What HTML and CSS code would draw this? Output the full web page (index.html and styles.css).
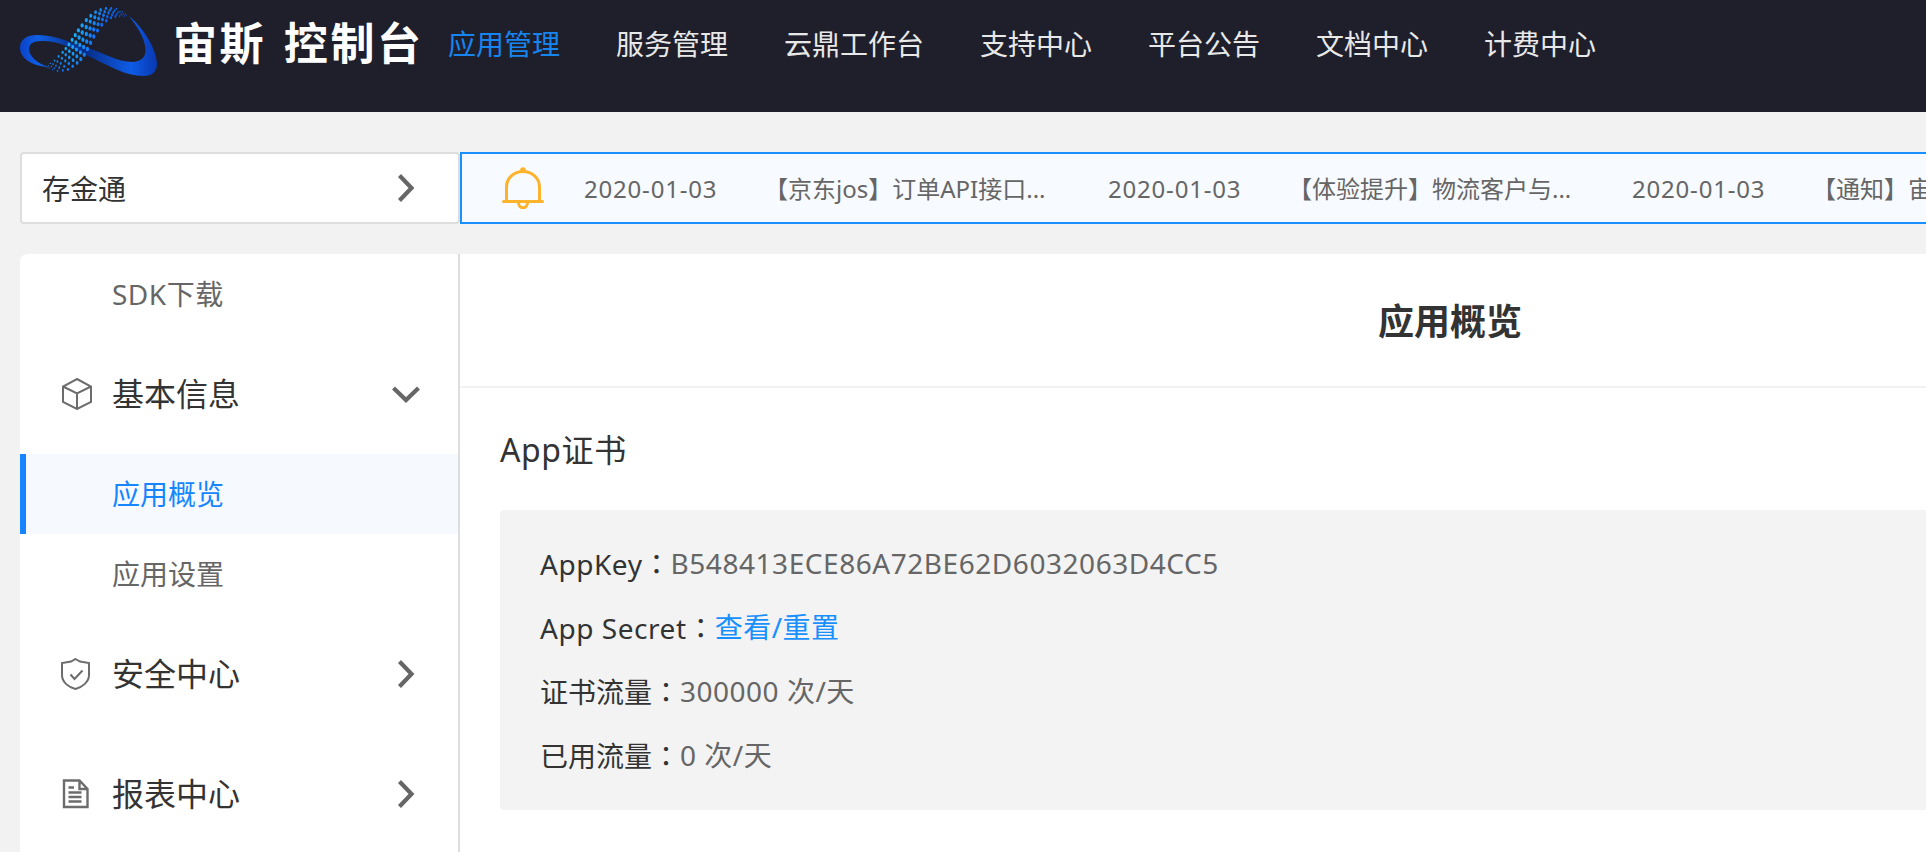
FILE: index.html
```html
<!DOCTYPE html>
<html lang="zh-CN">
<head>
<meta charset="utf-8">
<title>宙斯 控制台</title>
<link rel="stylesheet" href="styles.css">
</head>
<body>
<header class="topbar">
  <a class="brand">
    <svg class="brand-mark" viewBox="16 0 150 80">
      <defs>
        <linearGradient id="gl" gradientUnits="userSpaceOnUse" x1="20" x2="92"><stop offset="0" stop-color="#0b42c8"/><stop offset=".25" stop-color="#0f60e6"/><stop offset=".65" stop-color="#0a3a9e"/><stop offset="1" stop-color="#062a80"/></linearGradient>
        <linearGradient id="gr" gradientUnits="userSpaceOnUse" x1="80" x2="158"><stop offset="0" stop-color="#06287c"/><stop offset=".65" stop-color="#0f5ce6"/><stop offset="1" stop-color="#0836ae"/></linearGradient>
      </defs>
      <path fill="url(#gl)" d="M48 67C32 66 20 58 20 48C20 39 27 35 37 35C51 35 62 39 70 42L90 50L84 54L70 47.500C58 42 49 41 41 41C33 41 29 44 29 49C29 56 37 63 48 67Z"/>
      <path fill="url(#gr)" d="M80 46L88 48C102 52 117 62 133 62C142 61 145.500 57 145.500 50C145.500 39 137 26 129 16C145 29 157 51 157 64C157 72 152 76 144 76C124 76 106 64 84 54Z"/>
      <g id="dots"></g>
    </svg>
    <span class="brand-name">宙斯 控制台</span>
  </a>
  <nav class="nav">
    <a class="nav-item is-active">应用管理</a>
    <a class="nav-item">服务管理</a>
    <a class="nav-item">云鼎工作台</a>
    <a class="nav-item">支持中心</a>
    <a class="nav-item">平台公告</a>
    <a class="nav-item">文档中心</a>
    <a class="nav-item">计费中心</a>
  </nav>
</header>
<main class="page">
  <div class="strip">
    <div class="app-select">
      <span class="app-name">存金通</span>
      <svg class="arrow" viewBox="0 0 28 28"><path d="M7.500 1.500L19.500 14L7.500 26.500"/></svg>
    </div>
    <div class="notice">
      <svg class="bell" viewBox="0 0 42 42"><path d="M4.500 34V20C4.500 11 12 4.500 21 4.500S37.500 11 37.500 20V34M1.500 34.500H40.500M16.500 35.500C16.500 42.500 25.500 42.500 25.500 35.500"/><circle cx="21" cy="3" r="2.800"/></svg>
      <div class="notice-item"><span class="date">2020-01-03</span><span class="notice-title">【京东jos】订单API接口...</span></div>
      <div class="notice-item"><span class="date">2020-01-03</span><span class="notice-title">【体验提升】物流客户与...</span></div>
      <div class="notice-item"><span class="date">2020-01-03</span><span class="notice-title">【通知】宙斯</span></div>
    </div>
  </div>
  <div class="panel">
    <aside class="sidebar">
      <a class="sub sdk"><span>SDK下载</span></a>
      <a class="group">
        <svg class="icon cube" viewBox="0 0 32 32"><path d="M17 1L31 8.500V24L17 31L3 24V8.500ZM3 8.500L17 15.500L31 8.500M17 15.500V31"/></svg>
        <span>基本信息</span>
        <svg class="arrow" viewBox="0 0 28 28"><path d="M1.500 8L14 20L26.500 8"/></svg>
      </a>
      <a class="sub is-active"><span>应用概览</span></a>
      <a class="sub"><span>应用设置</span></a>
      <a class="group">
        <svg class="icon" viewBox="0 0 32 32"><path d="M15.500 1L20 3.500L29 5V17C29 24 22.500 29 15.500 31C8 29 2 24 2 17V5L11 3.500ZM10.500 16.500L14.500 21L22.500 12.500"/></svg>
        <span>安全中心</span>
        <svg class="arrow" viewBox="0 0 28 28"><path d="M7.500 1.500L19.500 14L7.500 26.500"/></svg>
      </a>
      <a class="group">
        <svg class="icon doc" viewBox="0 0 32 32"><path d="M19.500 2.500H4V29H27.500V11ZM19.500 2.500V11H27.500M8.500 9.500H14M8.500 14.500H21.500M8.500 19H21.500M8.500 23.500H21.500"/></svg>
        <span>报表中心</span>
        <svg class="arrow" viewBox="0 0 28 28"><path d="M7.500 1.500L19.500 14L7.500 26.500"/></svg>
      </a>
    </aside>
    <section class="content">
      <h1 class="title">应用概览</h1>
      <div class="body">
        <h2 class="section-title">App证书</h2>
        <div class="card">
          <div class="row"><span class="label latin">AppKey<span class="colon" lang="zh-TW">：</span></span><span class="hash">B548413ECE86A72BE62D6032063D4CC5</span></div>
          <div class="row"><span class="label latin">App Secret<span class="colon" lang="zh-TW">：</span></span><a class="link">查看/重置</a></div>
          <div class="row"><span class="label">证书流量<span class="colon" lang="zh-TW">：</span></span><span class="value">300000 次/天</span></div>
          <div class="row"><span class="label">已用流量<span class="colon" lang="zh-TW">：</span></span><span class="value">0 次/天</span></div>
        </div>
      </div>
    </section>
  </div>
</main>
<script src="logo.js"></script>
</body>
</html>
```
FILE: styles.css
```css
* { box-sizing: border-box; }
body { margin: 0; height: 852px; overflow: hidden; background: #f2f2f2; color: #333; font: 28px/40px "Noto Sans", "Noto Sans CJK SC", sans-serif; }
svg { display: block; flex: none; fill: none; }
span, a { white-space: nowrap; }
.topbar { display: flex; height: 112px; background: #1e1f2b; }
.brand { display: flex; flex: none; width: 420px; padding-left: 16px; }
.brand-mark { width: 150px; height: 80px; }
.brand-name { margin-left: 7px; color: #fff; font: 700 44px/82px "Noto Sans CJK SC", sans-serif; letter-spacing: 2.6px; word-spacing: 5px; }
.nav { display: flex; }
.nav-item { padding: 0 28px; line-height: 86px; color: #e8e8e8; font-family: "Noto Sans CJK SC", sans-serif; }
.nav-item.is-active { color: #1685f0; }
.page { width: 2460px; padding: 40px 20px 0; }
.strip { display: flex; height: 72px; margin-bottom: 30px; }
.app-select { display: flex; align-items: center; justify-content: space-between; flex: none; width: 440px; padding: 0 38px 0 20px; background: #fff; border: 2px solid #ddd; border-radius: 4px; }
.app-name { padding-top: 2px; }
.arrow { width: 28px; height: 28px; stroke: #666; stroke-width: 4.2; }
.notice { display: flex; align-items: center; flex: 1; padding-left: 40px; overflow: hidden; background: #f7faff; border: 2px solid #1890ff; color: #666; font-size: 24px; }
.bell { width: 42px; height: 42px; margin-right: 40px; stroke: #fdb32b; stroke-width: 3; stroke-linecap: round; }
.bell circle { fill: #fdb32b; stroke: none; }
.notice-item { display: flex; flex: none; width: 524px; padding-top: 1px; }
.date { width: 180px; letter-spacing: .8px; }
.panel { display: flex; height: 640px; background: #fff; border-radius: 8px; }
.sidebar { flex: none; width: 440px; border-right: 2px solid #ddd; }
.sub { display: flex; align-items: center; height: 80px; padding-left: 92px; color: #666; }
.sub.sdk { letter-spacing: .5px; }
.sub.is-active { padding-left: 86px; border-left: 6px solid #1685ff; background: #f6faff; color: #1685ff; }
.group { display: flex; align-items: center; height: 120px; padding: 0 38px 0 40px; font-size: 32px; }
.group .arrow { margin-left: auto; }
.icon { width: 32px; height: 32px; margin-right: 20px; stroke: #6c6c6c; stroke-width: 2; }
.icon.doc { stroke-width: 2.4; }
.content { flex: 1; }
.title { height: 134px; margin: 0; padding-top: 1px; border-bottom: 2px solid #f2f2f2; font-size: 36px; font-weight: 700; line-height: 134px; text-align: center; }
.body { padding: 0 40px; }
.section-title { height: 122px; margin: 0; font-size: 32px; font-weight: 400; line-height: 124px; letter-spacing: .6px; }
.card { height: 300px; padding: 21px 40px; background: #f3f3f3; border-radius: 4px; }
.row { display: flex; height: 64px; line-height: 64px; color: #666; }
.label { color: #333; }
.label.latin { letter-spacing: .55px; }
.colon { font-family: "Noto Sans CJK TC", sans-serif; letter-spacing: 0; }
.hash { letter-spacing: .55px; }
.value { letter-spacing: .5px; }
.link { color: #1890ff; letter-spacing: .5px; }
```
FILE: logo.js
```js
// Dotted ribbon of the logo: five rows of dots between two edges.
const upper = [[46, 66], [54, 61], [62, 53], [68, 46], [74, 37], [80, 28], [88, 18], [97, 11], [107, 8], [117, 9], [128, 15]];
const lower = [[48, 68], [57, 71], [67, 70], [76, 64], [83, 57], [89, 46], [95, 34], [103, 23], [112, 17], [120, 16], [129, 16]];
const at = (pts, t) => {
  const p = Math.max(0, Math.min(.9999, t)) * (pts.length - 1), i = Math.floor(p), f = p - i;
  return [0, 1].map(k => pts[i][k] * (1 - f) + pts[i + 1][k] * f);
};
const stops = [[18, 115, 220], [28, 180, 248], [22, 150, 248], [13, 80, 210]];
let out = '';
for (let r = 0; r < 5; r++) {
  for (let c = 0; c < 19; c++) {
    const t = (c + (r % 2) * .5) / 19, a = at(upper, t), b = at(lower, t), w = r / 4;
    const x = a[0] * (1 - w) + b[0] * w, y = a[1] * (1 - w) + b[1] * w;
    const s = .45 + 1.15 * Math.sin(Math.PI * t), q = Math.min(2.999, t * 3), i = Math.floor(q), f = q - i;
    const rgb = stops[i].map((v, k) => Math.round((v * (1 - f) + stops[i + 1][k] * f) * (k === 2 ? 1 : 1 - w * .25)));
    out += `<ellipse cx="${x}" cy="${y}" rx="${s}" ry="${s * 1.4}" fill="rgb(${rgb})"/>`;
  }
}
document.getElementById('dots').innerHTML = out;
```
